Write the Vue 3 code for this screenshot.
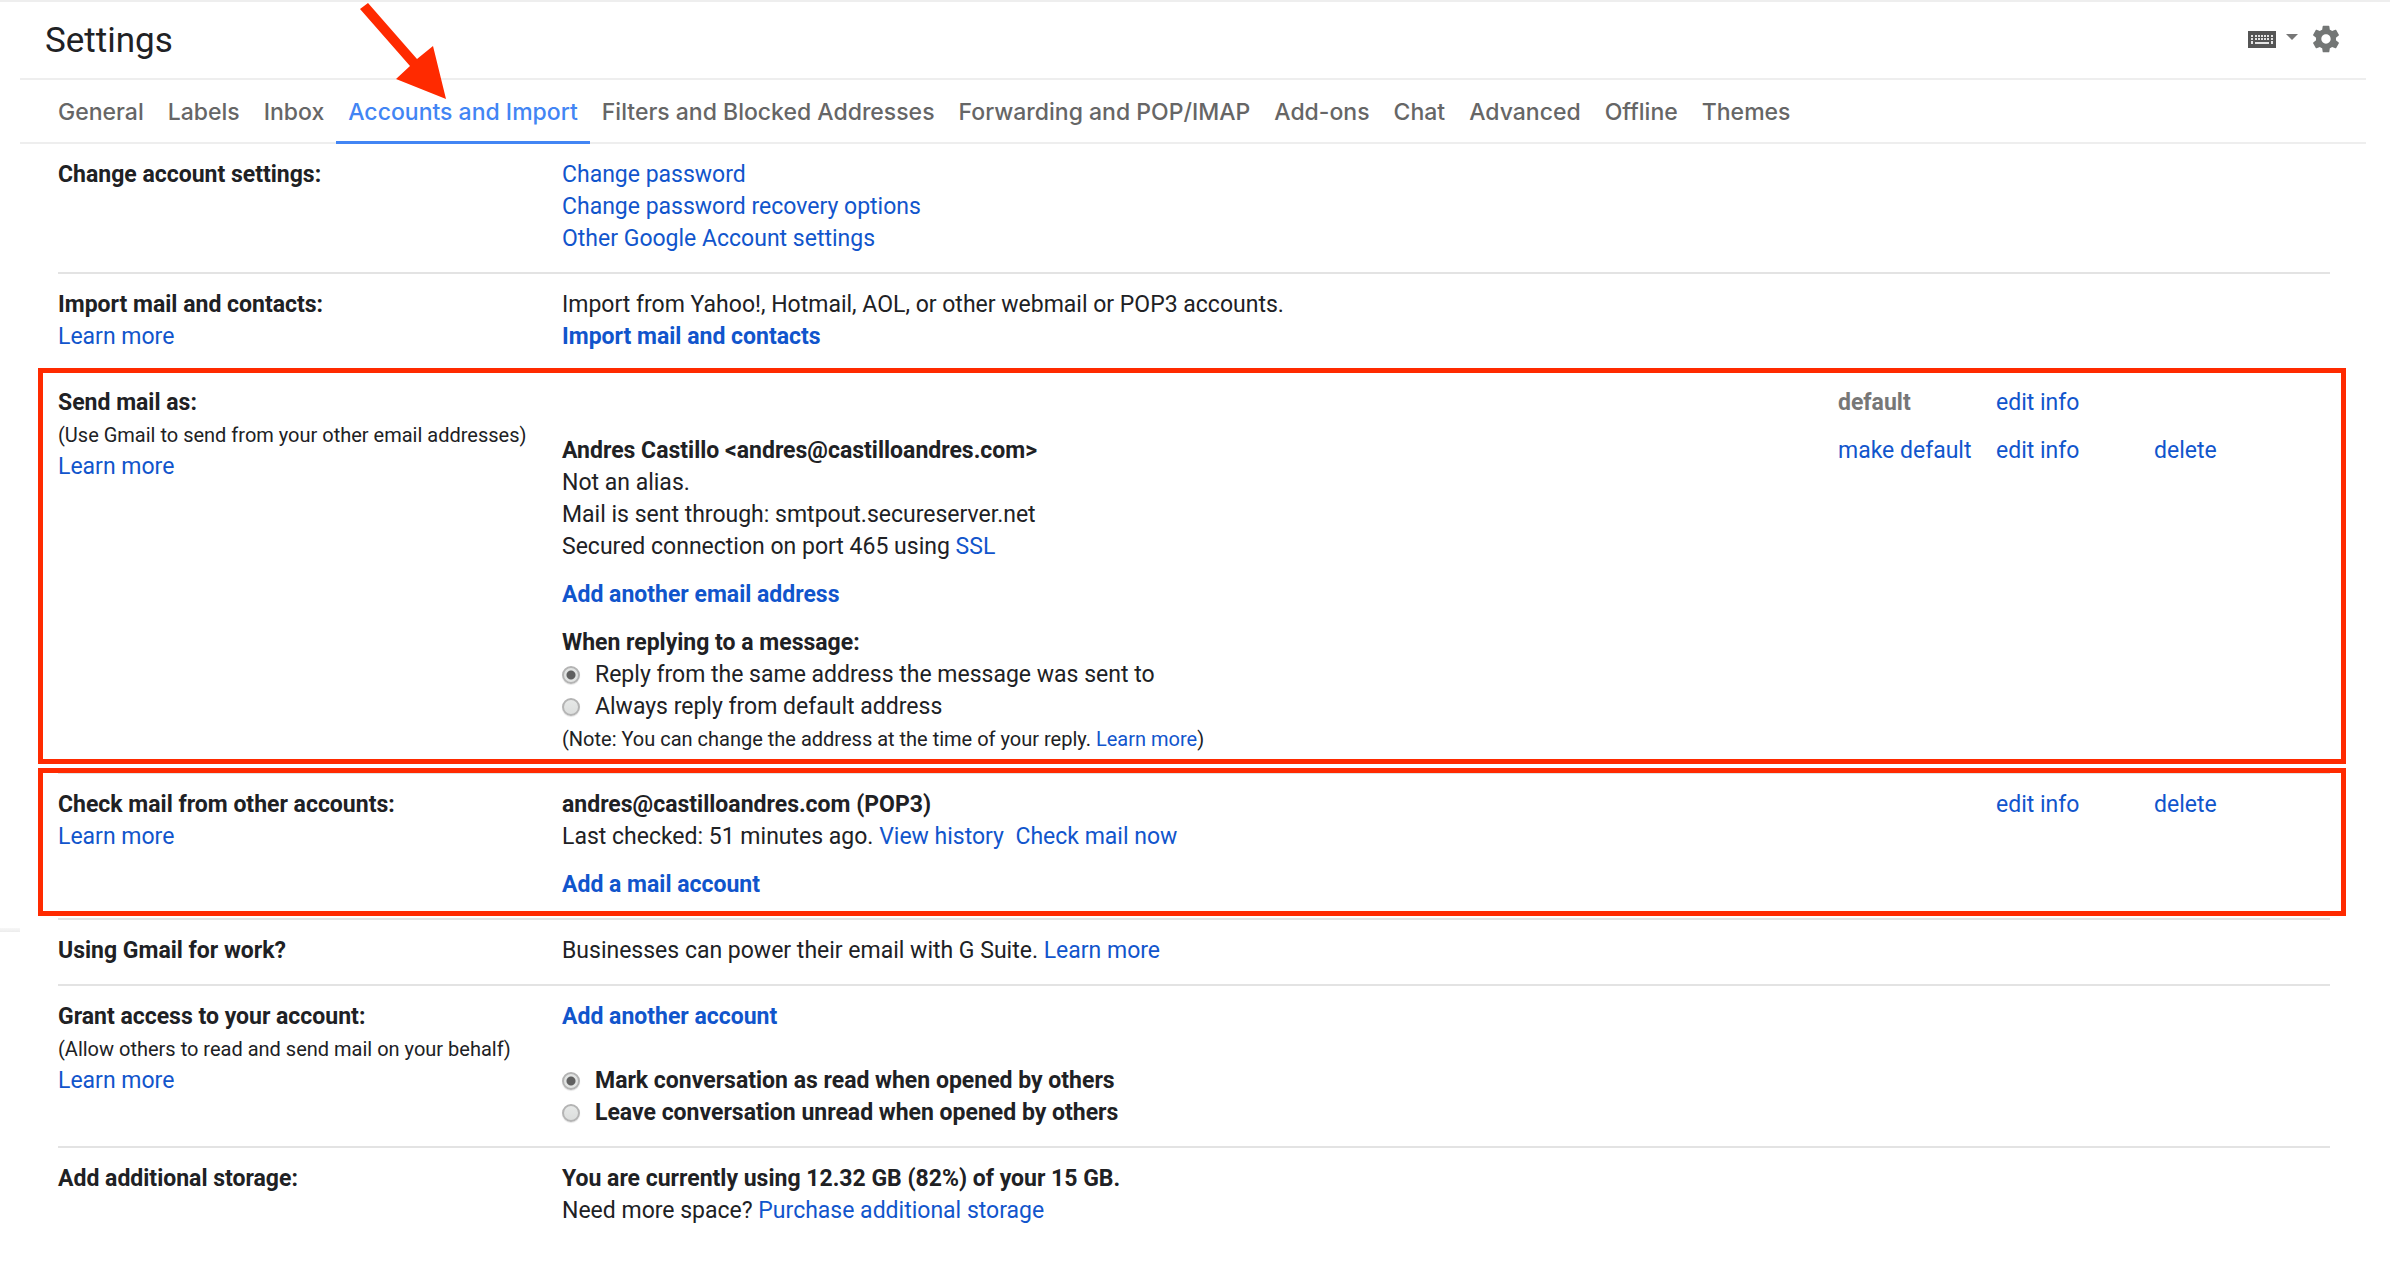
<script setup>
import { ref } from 'vue'

const tabs = [
  'General',
  'Labels',
  'Inbox',
  'Accounts and Import',
  'Filters and Blocked Addresses',
  'Forwarding and POP/IMAP',
  'Add-ons',
  'Chat',
  'Advanced',
  'Offline',
  'Themes',
]
const activeTab = ref('Accounts and Import')
const replyFrom = ref('same')
const readState = ref('read')
</script>

<template>
  <div class="page">
    <aside class="rail"><div class="rail-edge"></div></aside>

    <main class="settings">
      <header class="topbar">
        <h1>Settings</h1>
        <div class="tools">
          <button class="tool keyboard" type="button" aria-label="Input tools">
            <svg width="28" height="17" viewBox="0 0 28 17">
              <rect width="28" height="17" fill="#555" />
              <g fill="#e4e4e4">
                <path d="M3 4h2v2H3zM7 4h2v2H7zM10 4h2v2h-2zM13 4h2v2h-2zM16 4h2v2h-2zM19 4h2v2h-2zM23 4h2v2h-2z" />
                <path d="M3 7h2v2H3zM7 7h2v2H7zM10 7h2v2h-2zM13 7h2v2h-2zM16 7h2v2h-2zM19 7h2v2h-2zM23 7h2v2h-2z" />
                <path d="M3 10h2v3H3zM7 11h14v2H7zM23 10h2v3h-2z" />
              </g>
            </svg>
          </button>
          <button class="tool caret" type="button" aria-label="Select input tool">
            <svg width="12" height="6" viewBox="0 0 12 6"><path d="M0 0h12L6 6z" fill="#777" /></svg>
          </button>
          <button class="tool gear" type="button" aria-label="Settings menu">
            <svg width="32" height="32" viewBox="0 0 24 24">
              <path
                fill="#737675"
                d="M19.43 12.98c.04-.32.07-.64.07-.98s-.03-.66-.07-.98l2.11-1.65c.19-.15.24-.42.12-.64l-2-3.46c-.12-.22-.39-.3-.61-.22l-2.49 1c-.52-.4-1.08-.73-1.69-.98l-.38-2.65C14.46 2.18 14.25 2 14 2h-4c-.25 0-.46.18-.49.42l-.38 2.65c-.61.25-1.17.59-1.69.98l-2.49-1c-.23-.09-.49 0-.61.22l-2 3.46c-.13.22-.07.49.12.64l2.11 1.65c-.04.32-.07.65-.07.98s.03.66.07.98l-2.11 1.65c-.19.15-.24.42-.12.64l2 3.46c.12.22.39.3.61.22l2.49-1c.52.4 1.08.73 1.69.98l.38 2.65c.03.24.24.42.49.42h4c.25 0 .46-.18.49-.42l.38-2.65c.61-.25 1.17-.59 1.69-.98l2.49 1c.23.09.49 0 .61-.22l2-3.46c.12-.22.07-.49-.12-.64l-2.11-1.65zM12 15.5c-1.93 0-3.5-1.57-3.5-3.5s1.57-3.5 3.5-3.5 3.5 1.57 3.5 3.5-1.57 3.5-3.5 3.5z"
              />
            </svg>
          </button>
        </div>
      </header>

      <nav class="tabs">
        <a
          v-for="tab in tabs"
          :key="tab"
          href="#"
          :class="['tab', { active: tab === activeTab }]"
          @click.prevent="activeTab = tab"
          >{{ tab }}</a
        >
      </nav>

      <div class="sections">
        <section class="row">
          <div class="label"><h2>Change account settings:</h2></div>
          <div class="value">
            <p><a href="#">Change password</a></p>
            <p><a href="#">Change password recovery options</a></p>
            <p><a href="#">Other Google Account settings</a></p>
          </div>
        </section>

        <section class="row">
          <div class="label">
            <h2>Import mail and contacts:</h2>
            <p><a href="#">Learn more</a></p>
          </div>
          <div class="value">
            <p>Import from Yahoo!, Hotmail, AOL, or other webmail or POP3 accounts.</p>
            <p><a class="strong" href="#">Import mail and contacts</a></p>
          </div>
        </section>

        <section class="row marked marked-send">
          <div class="label">
            <h2>Send mail as:</h2>
            <p><small>(Use Gmail to send from your other email addresses)</small></p>
            <p><a href="#">Learn more</a></p>
          </div>
          <div class="value stack">
            <table class="accounts">
              <colgroup><col /><col class="act" /><col class="act" /><col class="act-last" /></colgroup>
              <tbody>
                <tr>
                  <td></td>
                  <td class="muted">default</td>
                  <td><a href="#">edit info</a></td>
                  <td></td>
                </tr>
                <tr>
                  <td>
                    <p class="strong">Andres Castillo &lt;andres@castilloandres.com&gt;</p>
                    <p>Not an alias.</p>
                    <p>Mail is sent through: smtpout.secureserver.net</p>
                    <p>Secured connection on port 465 using <a href="#">SSL</a></p>
                  </td>
                  <td><a href="#">make default</a></td>
                  <td><a href="#">edit info</a></td>
                  <td><a href="#">delete</a></td>
                </tr>
              </tbody>
            </table>
            <p><a class="strong" href="#">Add another email address</a></p>
            <div>
              <p class="strong">When replying to a message:</p>
              <label class="choice">
                <input v-model="replyFrom" type="radio" name="reply" value="same" />
                Reply from the same address the message was sent to
              </label>
              <label class="choice">
                <input v-model="replyFrom" type="radio" name="reply" value="default" />
                Always reply from default address
              </label>
              <p><small>(Note: You can change the address at the time of your reply. <a href="#">Learn more</a>)</small></p>
            </div>
          </div>
        </section>

        <section class="row marked marked-check">
          <div class="label">
            <h2>Check mail from other accounts:</h2>
            <p><a href="#">Learn more</a></p>
          </div>
          <div class="value stack">
            <table class="accounts">
              <colgroup><col /><col class="act" /><col class="act" /><col class="act-last" /></colgroup>
              <tbody>
                <tr>
                  <td>
                    <p class="strong">andres@castilloandres.com (POP3)</p>
                    <p>
                      Last checked: 51 minutes ago. <a href="#">View history</a>&nbsp;
                      <a href="#">Check mail now</a>
                    </p>
                  </td>
                  <td></td>
                  <td><a href="#">edit info</a></td>
                  <td><a href="#">delete</a></td>
                </tr>
              </tbody>
            </table>
            <p><a class="strong" href="#">Add a mail account</a></p>
          </div>
        </section>

        <section class="row">
          <div class="label"><h2>Using Gmail for work?</h2></div>
          <div class="value">
            <p>Businesses can power their email with G Suite. <a href="#">Learn more</a></p>
          </div>
        </section>

        <section class="row">
          <div class="label">
            <h2>Grant access to your account:</h2>
            <p><small>(Allow others to read and send mail on your behalf)</small></p>
            <p><a href="#">Learn more</a></p>
          </div>
          <div class="value stack-wide">
            <p><a class="strong" href="#">Add another account</a></p>
            <div class="strong">
              <label class="choice">
                <input v-model="readState" type="radio" name="read" value="read" />
                Mark conversation as read when opened by others
              </label>
              <label class="choice">
                <input v-model="readState" type="radio" name="read" value="unread" />
                Leave conversation unread when opened by others
              </label>
            </div>
          </div>
        </section>

        <section class="row">
          <div class="label"><h2>Add additional storage:</h2></div>
          <div class="value">
            <p class="strong">You are currently using 12.32 GB (82%) of your 15 GB.</p>
            <p>Need more space? <a href="#">Purchase additional storage</a></p>
          </div>
        </section>
      </div>
    </main>

    <svg class="pointer" width="90" height="100" viewBox="0 0 90 100" aria-hidden="true">
      <path d="M8 3L57 59L73 46L86 99L36 79L50 66L0 9z" fill="#ff2a00" />
    </svg>
  </div>
</template>

<style>
body {
  margin: 0;
  background: #fff;
}
</style>

<style scoped>
.page {
  position: relative;
  display: flex;
  border-top: 2px solid #eee;
  color: #202124;
  font: 400 23px/32px Roboto, 'Liberation Sans', sans-serif;
}

.rail {
  flex: none;
  width: 20px;
  padding-top: 926px;
}

.rail-edge {
  height: 4px;
  background: linear-gradient(#f7f7f7, #ececec);
}

.settings {
  flex: 1;
  min-width: 0;
  margin-right: 24px;
}

.topbar {
  display: flex;
  align-items: center;
  justify-content: space-between;
  box-sizing: border-box;
  height: 78px;
  padding: 0 24px 0 25px;
  border-bottom: 2px solid #eee;
}

h1 {
  margin: 0;
  padding-top: 2px;
  font-size: 35px;
  line-height: 40px;
  font-weight: 400;
}

.tools {
  display: flex;
  align-items: center;
  gap: 10px;
  padding-bottom: 2px;
}

.tool {
  display: flex;
  padding: 0;
  border: 0;
  background: none;
}

.caret {
  margin-bottom: 4px;
}

.gear {
  margin-left: 2px;
}

.tabs {
  display: flex;
  height: 62px;
  padding-left: 26px;
  border-bottom: 2px solid #eee;
}

.tab {
  box-sizing: border-box;
  height: 64px;
  padding: 0 12px;
  border-bottom: 3px solid transparent;
  color: #666;
  font-family: Inter, Roboto, sans-serif;
  font-size: 23px;
  font-weight: 500;
  line-height: 64px;
}

.tab.active {
  border-color: #4285f4;
  color: #4285f4;
}

.sections {
  padding: 0 36px 40px 38px;
}

.row {
  position: relative;
  display: grid;
  grid-template-columns: 504px 1fr;
  padding: 15px 0 17px;
  border-bottom: 2px solid #e3e3e3;
}

.row:last-child {
  border-bottom: 0;
}

.marked::after {
  content: '';
  position: absolute;
  left: -20px;
  right: -16px;
  border: 5px solid #ff2a00;
  pointer-events: none;
}

.marked-send::after {
  top: -4px;
  bottom: 8px;
}

.marked-check::after {
  top: -6px;
  bottom: 2px;
}

h2,
p {
  margin: 0;
  font-size: 23px;
  line-height: 32px;
}

h2,
.strong {
  font-weight: 700;
}

small {
  font-size: 20px;
  line-height: 20px;
}

a {
  color: #1155cc;
  text-decoration: none;
}

.stack,
.stack-wide {
  display: flex;
  flex-direction: column;
  gap: 16px;
}

.stack-wide {
  gap: 32px;
}

.accounts {
  width: 100%;
  table-layout: fixed;
  border-collapse: collapse;
}

.act {
  width: 158px;
}

.act-last {
  width: 176px;
}

td {
  padding: 0;
  vertical-align: top;
}

tr + tr td {
  padding-top: 16px;
}

.muted {
  color: #777;
  font-weight: 700;
}

.choice {
  display: flex;
  align-items: center;
  gap: 15px;
}

input[type='radio'] {
  appearance: none;
  flex: none;
  width: 18px;
  height: 18px;
  margin: 0;
  border: 2px solid #b4b4b4;
  border-radius: 50%;
  background: linear-gradient(#e6e8e7, #dcdedd);
  box-shadow: 0 1px 1px #e4e4e4;
}

input[type='radio']:checked {
  background: radial-gradient(circle, #606060 4px, #e2e4e3 5px);
}

.pointer {
  position: absolute;
  top: -2px;
  left: 360px;
}
</style>
